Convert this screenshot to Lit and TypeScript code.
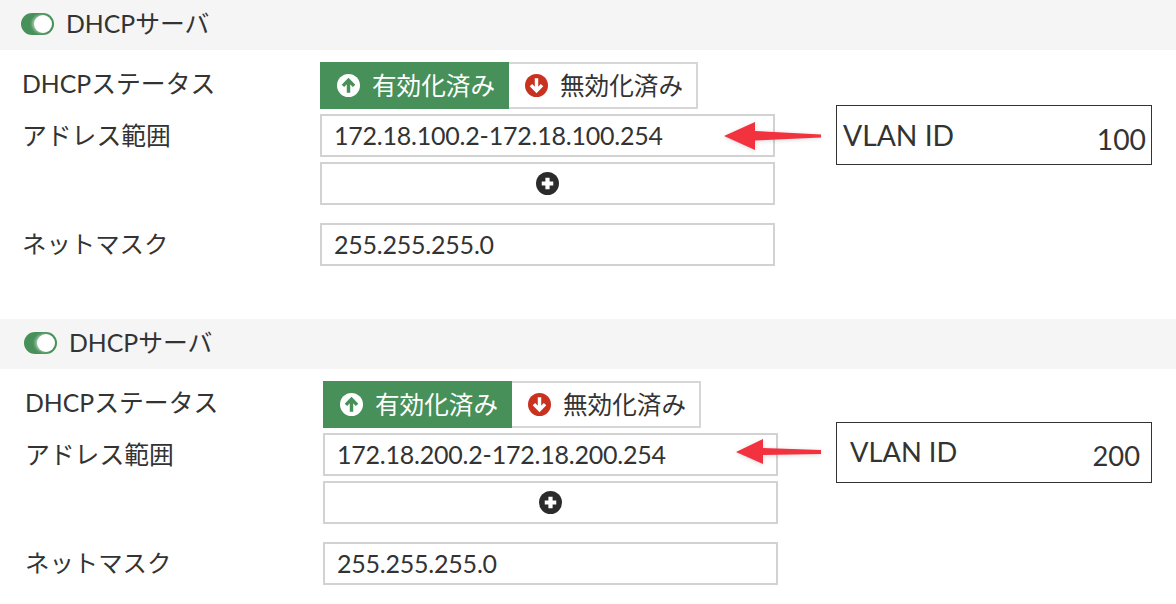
import { LitElement, css, html, svg } from 'lit';
import { customElement, property } from 'lit/decorators.js';

const plusIcon = html`<svg class="icon" viewBox="0 0 24 24" width="23" height="23">
  <circle cx="12" cy="12" r="12" fill="#2b2b2b"></circle>
  <path d="M12 6v12M6 12h12" stroke="#fff" stroke-width="4.4" fill="none"></path>
</svg>`;

const arrowIcon = (fill: string, stroke: string, down: boolean) => html`<svg class="icon" viewBox="0 0 24 24" width="23" height="23">
  <circle cx="12" cy="12" r="12" fill=${fill}></circle>
  <g transform=${down ? 'rotate(180 12 12)' : ''}>
    <path d="M12 19.5V7.5M6.2 12.4L12 6.4l5.8 6" stroke=${stroke} stroke-width="3.6" fill="none"></path>
  </g>
</svg>`;

@customElement('dhcp-section')
export class DhcpSection extends LitElement {
  @property({ type: String }) range = '';
  @property({ type: String }) vlan = '';
  @property({ type: Boolean, reflect: true }) second = false;

  static override styles = css`
    :host {
      display: block;
      position: relative;
      height: 319px;
      --shift: 0px;
    }

    :host([second]) {
      --shift: 3px;
    }

    .header {
      display: flex;
      align-items: center;
      gap: 12px;
      height: 50px;
      box-sizing: border-box;
      padding: 0 0 3px calc(21px + var(--shift));
      background: #f5f5f5;
      font-size: 24.8px;
    }

    .header-text {
      padding-bottom: 3px;
    }

    .toggle {
      display: flex;
      justify-content: flex-end;
      align-items: center;
      width: 33px;
      height: 22px;
      padding-right: 2px;
      box-sizing: border-box;
      border-radius: 11px;
      background: #47905a;
    }

    .knob {
      width: 18px;
      height: 18px;
      border-radius: 50%;
      background: #fff;
      box-shadow: -2px 0 3px rgba(255, 255, 255, 0.5);
    }

    .form {
      display: grid;
      grid-template-columns: 298px 455px;
      grid-template-rows: 47px 43px 43px 56px;
      row-gap: 5px;
      align-items: center;
      padding: 12px 0 0 calc(22px + var(--shift));
    }

    .label {
      padding-bottom: 4px;
      font-size: 24.8px;
    }

    .label.status {
      padding-bottom: 8px;
    }

    .label.netmask {
      grid-row: 4;
      align-self: end;
      height: 43px;
      box-sizing: border-box;
      display: flex;
      align-items: center;
      font-size: 24.4px;
    }

    .netmask-field {
      grid-row: 4;
      grid-column: 2;
      align-self: end;
    }

    .toggle-group {
      display: flex;
      height: 47px;
    }

    .choice {
      display: flex;
      align-items: center;
      gap: 12px;
      width: 189px;
      height: 47px;
      box-sizing: border-box;
      padding-left: 17px;
      font-size: 24.6px;
    }

    .choice span {
      padding-bottom: 4px;
    }

    .choice.on {
      background: #47905a;
      color: #fff;
    }

    .choice.off {
      padding-left: 16px;
      border: 2px solid #d6d6d6;
      border-left: none;
    }

    .field {
      display: flex;
      align-items: center;
      height: 43px;
      box-sizing: border-box;
      padding: 0 0 1px 12px;
      border: 2px solid #d2d2d2;
      font-size: 25px;
      letter-spacing: -0.22px;
    }

    .add {
      grid-column: 2;
      justify-content: center;
      padding: 0;
    }

    .callout {
      position: absolute;
      left: 836px;
      top: 105px;
      width: 316px;
      height: 60px;
      box-sizing: border-box;
      border: 1.5px solid #333;
      font-size: 28.3px;
      line-height: 34px;
    }

    :host([second]) .callout {
      top: 103px;
      height: 61px;
      font-size: 27.3px;
    }

    .callout .name {
      position: absolute;
      left: 6px;
      top: 12px;
    }

    .callout .id {
      position: absolute;
      right: 5px;
      top: 16px;
    }

    :host([second]) .callout .name {
      left: 13px;
      top: 12px;
    }

    :host([second]) .callout .id {
      right: 11px;
      top: 16px;
    }

    .pointer {
      position: absolute;
      left: 720px;
      top: 115px;
      filter: drop-shadow(0 1px 2px rgba(0, 0, 0, 0.15));
    }

    :host([second]) .pointer {
      top: 113px;
    }

    .icon {
      display: block;
      flex: none;
    }
  `;

  override render() {
    const head = this.second
      ? svg`<path d="M16 20L43 7V16L101 18V22L43 23V32Z" fill="#f2323f"></path>`
      : svg`<path d="M4 21L35 7V16L101 19.5V22.5L35 25.5V35Z" fill="#f2323f"></path>`;

    return html`
      <div class="header">
        <span class="toggle"><span class="knob"></span></span>
        <span class="header-text">DHCPサーバ</span>
      </div>
      <div class="form">
        <span class="label status">DHCPステータス</span>
        <div class="toggle-group">
          <div class="choice on">${arrowIcon('#fff', '#47905a', false)}<span>有効化済み</span></div>
          <div class="choice off">${arrowIcon('#c8321f', '#fff', true)}<span>無効化済み</span></div>
        </div>
        <span class="label">アドレス範囲</span>
        <div class="field">${this.range}</div>
        <div class="field add">${plusIcon}</div>
        <span class="label netmask">ネットマスク</span>
        <div class="field netmask-field">255.255.255.0</div>
      </div>
      <svg class="pointer" width="104" height="44">${head}</svg>
      <div class="callout">
        <span class="name">VLAN ID</span>
        <span class="id">${this.vlan}</span>
      </div>
    `;
  }
}

@customElement('app-root')
export class AppRoot extends LitElement {
  static override styles = css`
    :host {
      display: block;
      height: 604px;
      overflow: hidden;
      background: #fff;
      color: #333;
      font-family: Lato, 'Noto Sans CJK JP', sans-serif;
    }
  `;

  override render() {
    return html`
      <dhcp-section range="172.18.100.2-172.18.100.254" vlan="100"></dhcp-section>
      <dhcp-section second range="172.18.200.2-172.18.200.254" vlan="200"></dhcp-section>
    `;
  }
}
